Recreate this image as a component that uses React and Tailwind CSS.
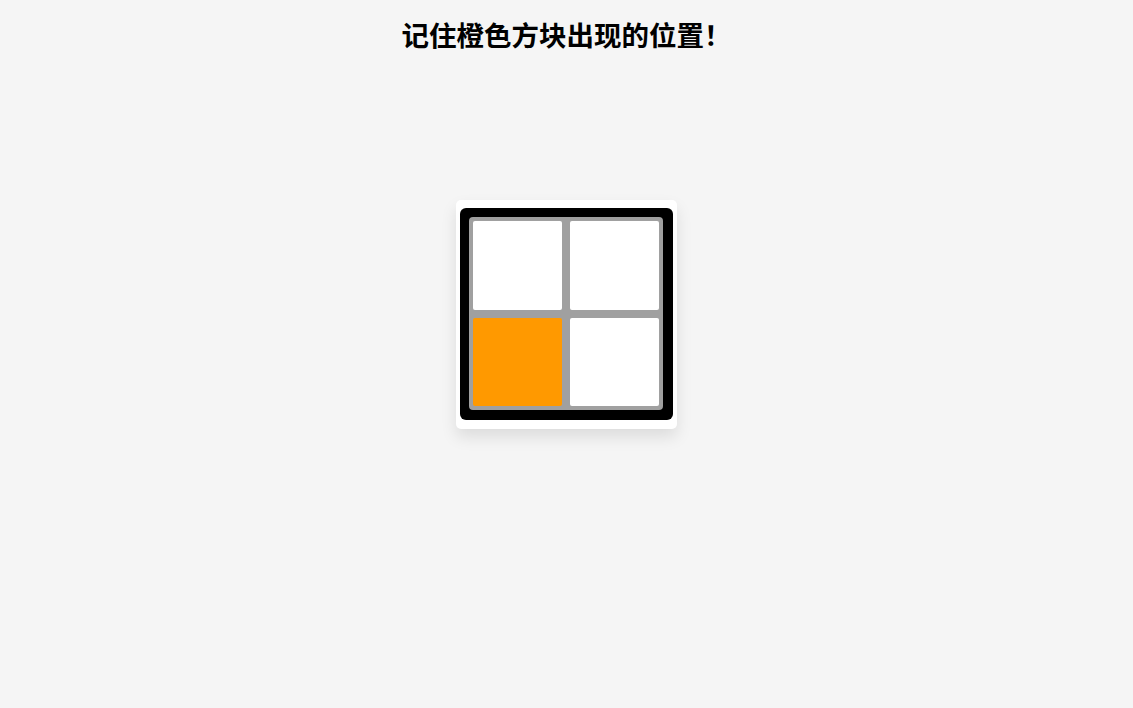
export default function App() {
  // 2x2 memory grid, index 2 is highlighted
  const cells = [false, false, true, false];

  return (
    <div
      className="min-h-[708px] w-full bg-[#f5f5f5] flex flex-col items-center"
      style={{ fontFamily: '"Noto Sans CJK SC", "Noto Sans", sans-serif' }}
    >
      <h1 className="mt-[14px] text-[27.5px] font-semibold leading-normal text-black">
        记住橙色方块出现的位置！
      </h1>

      <div className="mt-[145px] bg-white rounded-[5px] pt-2 px-1 pb-[9px] shadow-[0_8px_16px_rgba(0,0,0,0.10)]">
        <div className="bg-black rounded-[6px] pt-[9px] pl-[9px] pr-[10px] pb-[10px]">
          <div className="w-[194px] h-[193px] bg-[#a0a0a0] rounded-[4px] p-1 grid grid-cols-2 gap-2">
            {cells.map((on, i) => (
              <div
                key={i}
                className={`rounded-[2px] ${on ? "bg-[#ff9900]" : "bg-white"}`}
              />
            ))}
          </div>
        </div>
      </div>
    </div>
  );
}
